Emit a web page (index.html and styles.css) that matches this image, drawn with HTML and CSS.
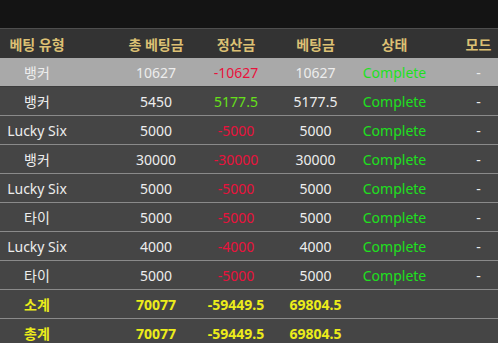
FILE: index.html
```html
<!DOCTYPE html>
<html lang="ko">
<head>
<meta charset="utf-8">
<link rel="stylesheet" href="styles.css">
</head>
<body>
<div class="topbar"></div>
<table class="bets">
  <colgroup>
    <col class="c-type"><col class="c-total"><col class="c-settle"><col class="c-bet"><col class="c-state"><col class="c-mode">
  </colgroup>
  <thead>
    <tr><th class="type">베팅 유형</th><th>총 베팅금</th><th>정산금</th><th>베팅금</th><th>상태</th><th class="mode">모드</th></tr>
  </thead>
  <tbody>
    <tr class="hl"><td class="type">뱅커</td><td>10627</td><td class="neg">-10627</td><td>10627</td><td class="ok">Complete</td><td class="mode">-</td></tr>
    <tr><td class="type">뱅커</td><td>5450</td><td class="pos">5177.5</td><td>5177.5</td><td class="ok">Complete</td><td class="mode">-</td></tr>
    <tr><td class="type">Lucky Six</td><td>5000</td><td class="neg">-5000</td><td>5000</td><td class="ok">Complete</td><td class="mode">-</td></tr>
    <tr><td class="type">뱅커</td><td>30000</td><td class="neg">-30000</td><td>30000</td><td class="ok">Complete</td><td class="mode">-</td></tr>
    <tr><td class="type">Lucky Six</td><td>5000</td><td class="neg">-5000</td><td>5000</td><td class="ok">Complete</td><td class="mode">-</td></tr>
    <tr><td class="type">타이</td><td>5000</td><td class="neg">-5000</td><td>5000</td><td class="ok">Complete</td><td class="mode">-</td></tr>
    <tr><td class="type">Lucky Six</td><td>4000</td><td class="neg">-4000</td><td>4000</td><td class="ok">Complete</td><td class="mode">-</td></tr>
    <tr><td class="type">타이</td><td>5000</td><td class="neg">-5000</td><td>5000</td><td class="ok">Complete</td><td class="mode">-</td></tr>
    <tr class="sum"><td class="type">소계</td><td>70077</td><td>-59449.5</td><td>69804.5</td><td></td><td class="mode"></td></tr>
    <tr class="sum"><td class="type">총계</td><td>70077</td><td>-59449.5</td><td>69804.5</td><td></td><td class="mode"></td></tr>
  </tbody>
</table>
</body>
</html>
```
FILE: styles.css
```css
html, body {
  margin: 0;
  padding: 0;
  background: #454545;
  overflow: hidden;
}
body {
  font-family: "Noto Sans", "Noto Sans CJK KR", sans-serif;
  font-size: 14px;
  color: #ededed;
}
.topbar {
  height: 28px;
  background: #141414;
  border-bottom: 1px solid #4e4e4e;
}
.bets {
  width: 498px;
  border-collapse: collapse;
  table-layout: fixed;
}
.c-type { width: 116px; }
.c-total { width: 80px; }
.c-settle { width: 80px; }
.c-bet { width: 79px; }
.c-state { width: 79px; }
.c-mode { width: 64px; }
.bets th, .bets td {
  padding: 0;
  text-align: center;
  white-space: nowrap;
}
.bets th.type, .bets td.type { padding-right: 42px; }
.bets th.mode, .bets td.mode { padding-left: 25px; }
.bets th {
  height: 29px;
  background: #333333;
  color: #dcc074;
  font-weight: bold;
  font-size: 14px;
}
.bets td {
  height: 28px;
  border-bottom: 1px solid #8a8a8a;
  background: #454545;
}
.bets tr.hl td { background: #a9a9a9; border-bottom-color: #3c3c3c; }
.neg { color: #e8123c; }
.pos { color: #66e01a; }
.ok { color: #1ee01e; }
.sum td {
  color: #ecec1a;
  font-weight: bold;
}
```
